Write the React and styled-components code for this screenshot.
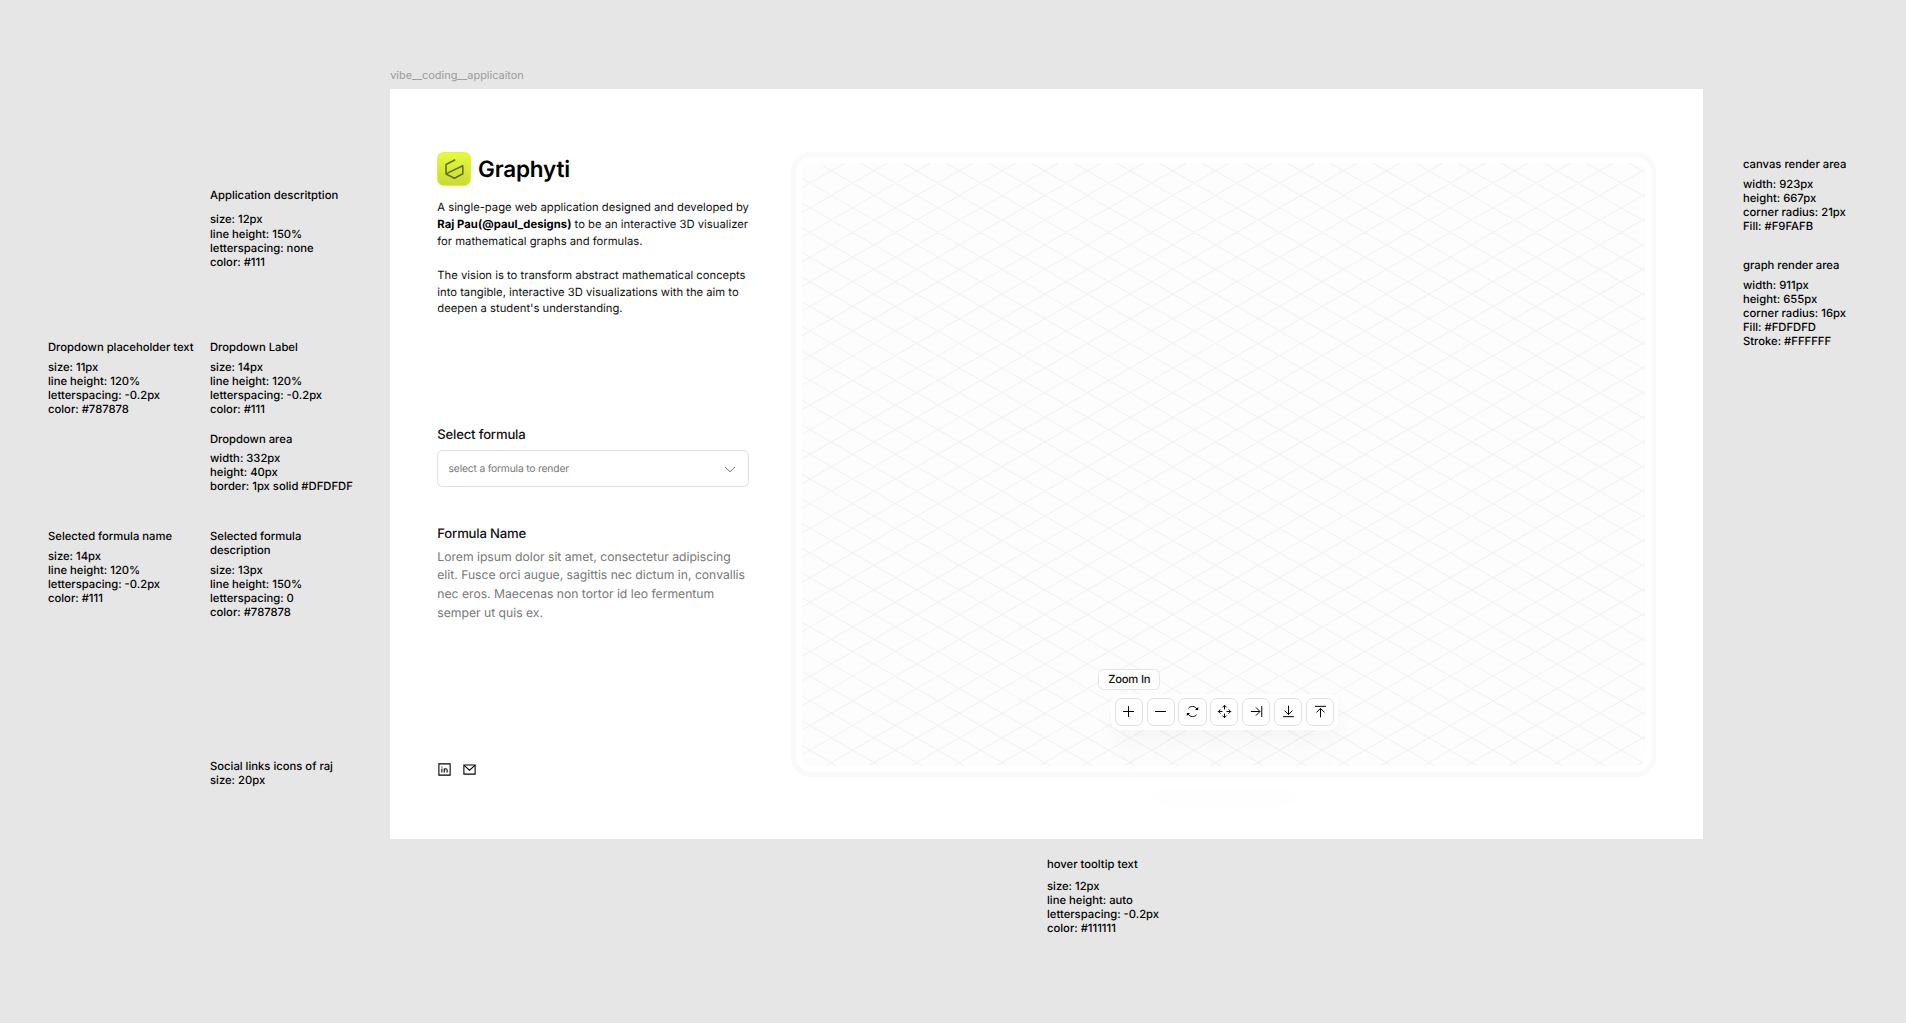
import React from "react";
import styled, { createGlobalStyle } from "styled-components";

const GlobalStyle = createGlobalStyle`
  *, *::before, *::after { box-sizing: border-box; }
  body {
    margin: 0;
    background: #e6e6e6;
    font-family: Inter, "Liberation Sans", sans-serif;
    text-rendering: geometricPrecision;
    color: #000;
    overflow: hidden;
  }
  p, h1, h2, h3 { margin: 0; }
`;

const Board = styled.main`
  display: grid;
  grid-template-columns: 390.2px 1313px 1fr;
  width: 1906px;
  height: 1023px;
  background: #e6e6e6;
`;

const NoteColumns = styled.aside`
  display: grid;
  grid-template-columns: 162px 1fr;
  padding-left: 48px;
  align-items: start;
`;

const NoteColumn = styled.div`
  display: flex;
  flex-direction: column;
  padding-top: ${(p) => p.$top}px;
  padding-left: ${(p) => p.$left || 0}px;
`;

const NoteBox = styled.section`
  display: flex;
  flex-direction: column;
  gap: ${(p) => p.$gap}px;
  margin-bottom: ${(p) => p.$after}px;
  font-size: 11.25px;
  line-height: 14.07px;
  font-weight: 500;
  white-space: pre-line;
`;

const NoteTitle = styled.h3`
  font-size: inherit;
  font-weight: inherit;
`;

const NoteBody = styled.p``;

const Center = styled.div`
  display: flex;
  flex-direction: column;
`;

const FrameName = styled.div`
  height: 89px;
  padding-top: 68px;
  font-size: 10.95px;
  line-height: 14px;
  color: #9b9b9b;
`;

const Frame = styled.div`
  display: flex;
  flex: none;
  justify-content: space-between;
  width: 1313px;
  height: 750px;
  padding: 63px 47px 0 47.1px;
  background: #fff;
`;

const Sidebar = styled.div`
  display: flex;
  flex-direction: column;
  width: 311.4px;
  height: 625.6px;
`;

const Brand = styled.div`
  display: flex;
  align-items: center;
  gap: 7px;
  height: 34px;
`;

const LogoTile = styled.div`
  display: grid;
  place-items: center;
  width: 33.8px;
  height: 33.8px;
  border: 1px solid #dcf432;
  border-radius: 6.6px;
  background: linear-gradient(#e3fb3c, #c9da35);
`;

const BrandName = styled.h1`
  padding-top: 2px;
  font-size: 22.5px;
  line-height: 28px;
  font-weight: 600;
  letter-spacing: -0.2px;
`;

const About = styled.p`
  margin-top: ${(p) => p.$top}px;
  font-size: 11.25px;
  line-height: 16.88px;
  color: #111;
  white-space: nowrap;
`;

const Strong = styled.strong`
  font-weight: 700;
  letter-spacing: 0.05px;
  color: #000;
`;

const Label = styled.h2`
  margin-top: ${(p) => p.$top}px;
  font-size: 13.13px;
  line-height: 16px;
  font-weight: 500;
  letter-spacing: -0.19px;
  color: #111;
`;

const Dropdown = styled.button`
  display: flex;
  align-items: center;
  justify-content: space-between;
  height: 37.4px;
  margin-top: 7.2px;
  padding: 2.4px 12px 0 10.3px;
  border: 1px solid #dfdfdf;
  border-radius: 5.6px;
  background: #fff;
  font-family: inherit;
  text-rendering: inherit;
  font-size: 10.32px;
  line-height: 13px;
  letter-spacing: -0.19px;
  color: #787878;
`;

const FormulaText = styled.p`
  margin-top: 5.8px;
  font-size: 12.19px;
  line-height: 18.7px;
  letter-spacing: -0.015px;
  color: #787878;
  white-space: nowrap;
`;

const Social = styled.div`
  display: flex;
  gap: 10.2px;
  margin-top: auto;
  margin-bottom: 0.4px;
`;

const Canvas = styled.div`
  width: 865px;
  height: 624.8px;
  padding: 5.2px;
  border-radius: 19.7px;
  background: #f9fafb;
`;

const Graph = styled.div`
  position: relative;
  display: flex;
  justify-content: center;
  width: 100%;
  height: 100%;
  border: 6px solid #fff;
  border-radius: 15px;
  background: #fdfdfd;
`;

const GridSvg = styled.svg`
  position: absolute;
  inset: 0;
  width: 100%;
  height: 100%;
  border-radius: 9px;
`;

const Toolbar = styled.div`
  position: relative;
  display: flex;
  gap: 3.75px;
  align-self: flex-end;
  margin-left: 1.4px;
  margin-bottom: 35.9px;
  padding: 3.8px;
  border-radius: 9.4px;
  background: #fff;
  box-shadow: 0 9px 21px rgba(0, 0, 0, 0.03), 0 38px 38px rgba(0, 0, 0, 0.012),
    0 85px 51px rgba(0, 0, 0, 0.007);
`;

const ToolButton = styled.button`
  display: grid;
  place-items: center;
  width: 28.14px;
  height: 28.14px;
  padding: 0;
  border: 1px solid #e0e0e0;
  border-radius: 6.6px;
  background: #fff;
  color: #000;
`;

const Tooltip = styled.div`
  position: absolute;
  left: -12.5px;
  top: -25px;
  width: 61.8px;
  height: 21px;
  border: 1px solid #e4e4e4;
  border-radius: 5.6px;
  background: #fff;
  font-size: 11.25px;
  line-height: 19.8px;
  font-weight: 500;
  letter-spacing: -0.19px;
  text-align: center;
  color: #111;
`;

const Icon = ({ size = 15, w = 1.05, children, view = 16 }) => (
  <svg
    width={size}
    height={size}
    viewBox={`0 0 ${view} ${view}`}
    fill="none"
    stroke="currentColor"
    strokeWidth={w}
  >
    {children}
  </svg>
);

const TOOLS = [
  { name: "Zoom In", art: <path d="M8 2.2V13.8M2.2 8H13.8" /> },
  { name: "Zoom Out", art: <path d="M2.2 8H13.8" /> },
  {
    name: "Rotate",
    art: (
      <>
        <path d="M3.6 4.6C4.8 3.2 6.3 2.6 8 2.6C10.2 2.6 12 3.8 12.9 5.7M12.4 11.4C11.2 12.8 9.7 13.4 8 13.4C5.8 13.4 4 12.2 3.1 10.3" />
        <path d="M10.6 6.5H14.1V3.2ZM5.4 9.5H1.9V12.8Z" fill="currentColor" stroke="none" />
      </>
    ),
  },
  {
    name: "Move",
    art: (
      <>
        <path d="M8 1.5V5.8M8 10.2V14.5M1.5 8H5.8M10.2 8H14.5" />
        <path d="M5.8 3.6L8 1.4L10.2 3.6M5.8 12.4L8 14.6L10.2 12.4M3.6 5.8L1.4 8L3.6 10.2M12.4 5.8L14.6 8L12.4 10.2" />
      </>
    ),
  },
  { name: "Side view", art: <path d="M2 8H11.6M7.4 3.7L11.7 8L7.4 12.3M13.6 2.2V13.8" /> },
  { name: "Bottom view", art: <path d="M8 1.8V11.2M3.7 7L8 11.3L12.3 7M2.2 13.5H13.8" /> },
  { name: "Top view", art: <path d="M8 14.2V4.8M3.7 9L8 4.7L12.3 9M2.2 2.5H13.8" /> },
];

const STEP_X = 42.69;
const SLOPE = 0.5775;
const NODE = { x: 29.3, y: 7.8 };
const AREA = { w: 842.6, h: 602.4 };

function gridPath() {
  const parts = [];
  for (let k = -26; k <= 20; k += 1) {
    const x0 = NODE.x + k * STEP_X - NODE.y / SLOPE;
    const from = k === 0 ? 3 : 0;
    parts.push(`M${x0 + from / SLOPE} ${from}L${x0 + AREA.h / SLOPE} ${AREA.h}`);
  }
  for (let k = 0; k <= 43; k += 1) {
    const x0 = NODE.x + k * STEP_X + NODE.y / SLOPE;
    parts.push(`M${x0} 0L${x0 - AREA.h / SLOPE} ${AREA.h}`);
  }
  return parts.join("");
}

function Note({ title, lines, gap = 5.6, after = 0 }) {
  return (
    <NoteBox $gap={gap} $after={after}>
      <NoteTitle>{title}</NoteTitle>
      <NoteBody>{lines.join("\n")}</NoteBody>
    </NoteBox>
  );
}

export default function App() {
  return (
    <>
      <GlobalStyle />
      <Board>
        <NoteColumns>
          <NoteColumn $top={340}>
            <Note
              title="Dropdown placeholder text"
              lines={["size: 11px", "line height: 120%", "letterspacing: -0.2px", "color: #787878"]}
              after={113.4}
            />
            <Note
              title="Selected formula name"
              lines={["size: 14px", "line height: 120%", "letterspacing: -0.2px", "color: #111"]}
            />
          </NoteColumn>
          <NoteColumn $top={188}>
            <Note
              title="Application descritption"
              lines={["size: 12px", "line height: 150%", "letterspacing: none", "color: #111"]}
              gap={10.4}
              after={71.3}
            />
            <Note
              title="Dropdown Label"
              lines={["size: 14px", "line height: 120%", "letterspacing: -0.2px", "color: #111"]}
              after={15.8}
            />
            <Note
              title="Dropdown area"
              lines={["width: 332px", "height: 40px", "border: 1px solid #DFDFDF"]}
              after={35.6}
            />
            <Note
              title={"Selected formula\ndescription"}
              lines={["size: 13px", "line height: 150%", "letterspacing: 0", "color: #787878"]}
              after={140}
            />
            <Note title="Social links icons of raj" lines={["size: 20px"]} gap={0} />
          </NoteColumn>
        </NoteColumns>

        <Center>
          <FrameName>vibe__coding__applicaiton</FrameName>
          <Frame>
            <Sidebar>
              <Brand>
                <LogoTile>
                  <svg width="20" height="22" viewBox="0 0 20 22" fill="none" stroke="#626d16" strokeWidth="1.55" strokeLinejoin="round">
                    <path d="M11.2 1.8L2 6.5V16L10.5 20.2L18.8 15.7V7.8L2.4 15.6" />
                  </svg>
                </LogoTile>
                <BrandName>Graphyti</BrandName>
              </Brand>
              <About $top={13.2}>
                A single-page web application designed and developed by
                <br />
                <Strong>Raj Pau(@paul_designs)</Strong> to be an interactive 3D visualizer
                <br />
                for mathematical graphs and formulas.
              </About>
              <About $top={16.9}>
                The vision is to transform abstract mathematical concepts
                <br />
                into tangible, interactive 3D visualizations with the aim to
                <br />
                deepen a student's understanding.
              </About>
              <Label $top={109.5}>Select formula</Label>
              <Dropdown>
                select a formula to render
                <Icon size={12} view={12} w={1}>
                  <path d="M1 3L6 7.8L11 3" />
                </Icon>
              </Dropdown>
              <Label $top={38.4}>Formula Name</Label>
              <FormulaText>
                Lorem ipsum dolor sit amet, consectetur adipiscing
                <br />
                elit. Fusce orci augue, sagittis nec dictum in, convallis
                <br />
                nec eros. Maecenas non tortor id leo fermentum
                <br />
                semper ut quis ex.
              </FormulaText>
              <Social>
                <Icon size={15} w={1.15}>
                  <path d="M2 2H14V14H2Z" />
                  <path d="M5.2 7V11.3M5.2 4.8V5.9M7.7 11.3V7M7.7 9C7.7 7.8 8.4 7.2 9.3 7.2C10.3 7.2 10.8 7.9 10.8 8.9V11.3" />
                </Icon>
                <Icon size={15} w={1.15}>
                  <path d="M2 3.2H14V12.9H2Z" />
                  <path d="M2.2 3.6L8 8.8L13.8 3.6" />
                </Icon>
              </Social>
            </Sidebar>

            <Canvas>
              <Graph>
                <GridSvg viewBox={`0 0 ${AREA.w} ${AREA.h}`} preserveAspectRatio="none">
                  <path d={gridPath()} fill="none" stroke="#f2f2f5" strokeWidth="1" />
                </GridSvg>
                <Toolbar>
                  <Tooltip>Zoom In</Tooltip>
                  {TOOLS.map((tool) => (
                    <ToolButton key={tool.name} aria-label={tool.name}>
                      <Icon>{tool.art}</Icon>
                    </ToolButton>
                  ))}
                </Toolbar>
              </Graph>
            </Canvas>
          </Frame>
          <NoteColumn $top={18.4} $left={656.8}>
            <Note
              title="hover tooltip text"
              lines={["size: 12px", "line height: auto", "letterspacing: -0.2px", "color: #111111"]}
              gap={7.5}
            />
          </NoteColumn>
        </Center>

        <NoteColumn $top={157} $left={39.8}>
          <Note
            title="canvas render area"
            lines={["width: 923px", "height: 667px", "corner radius: 21px", "Fill: #F9FAFB"]}
            after={25.3}
          />
          <Note
            title="graph render area"
            lines={["width: 911px", "height: 655px", "corner radius: 16px", "Fill: #FDFDFD", "Stroke: #FFFFFF"]}
          />
        </NoteColumn>
      </Board>
    </>
  );
}
